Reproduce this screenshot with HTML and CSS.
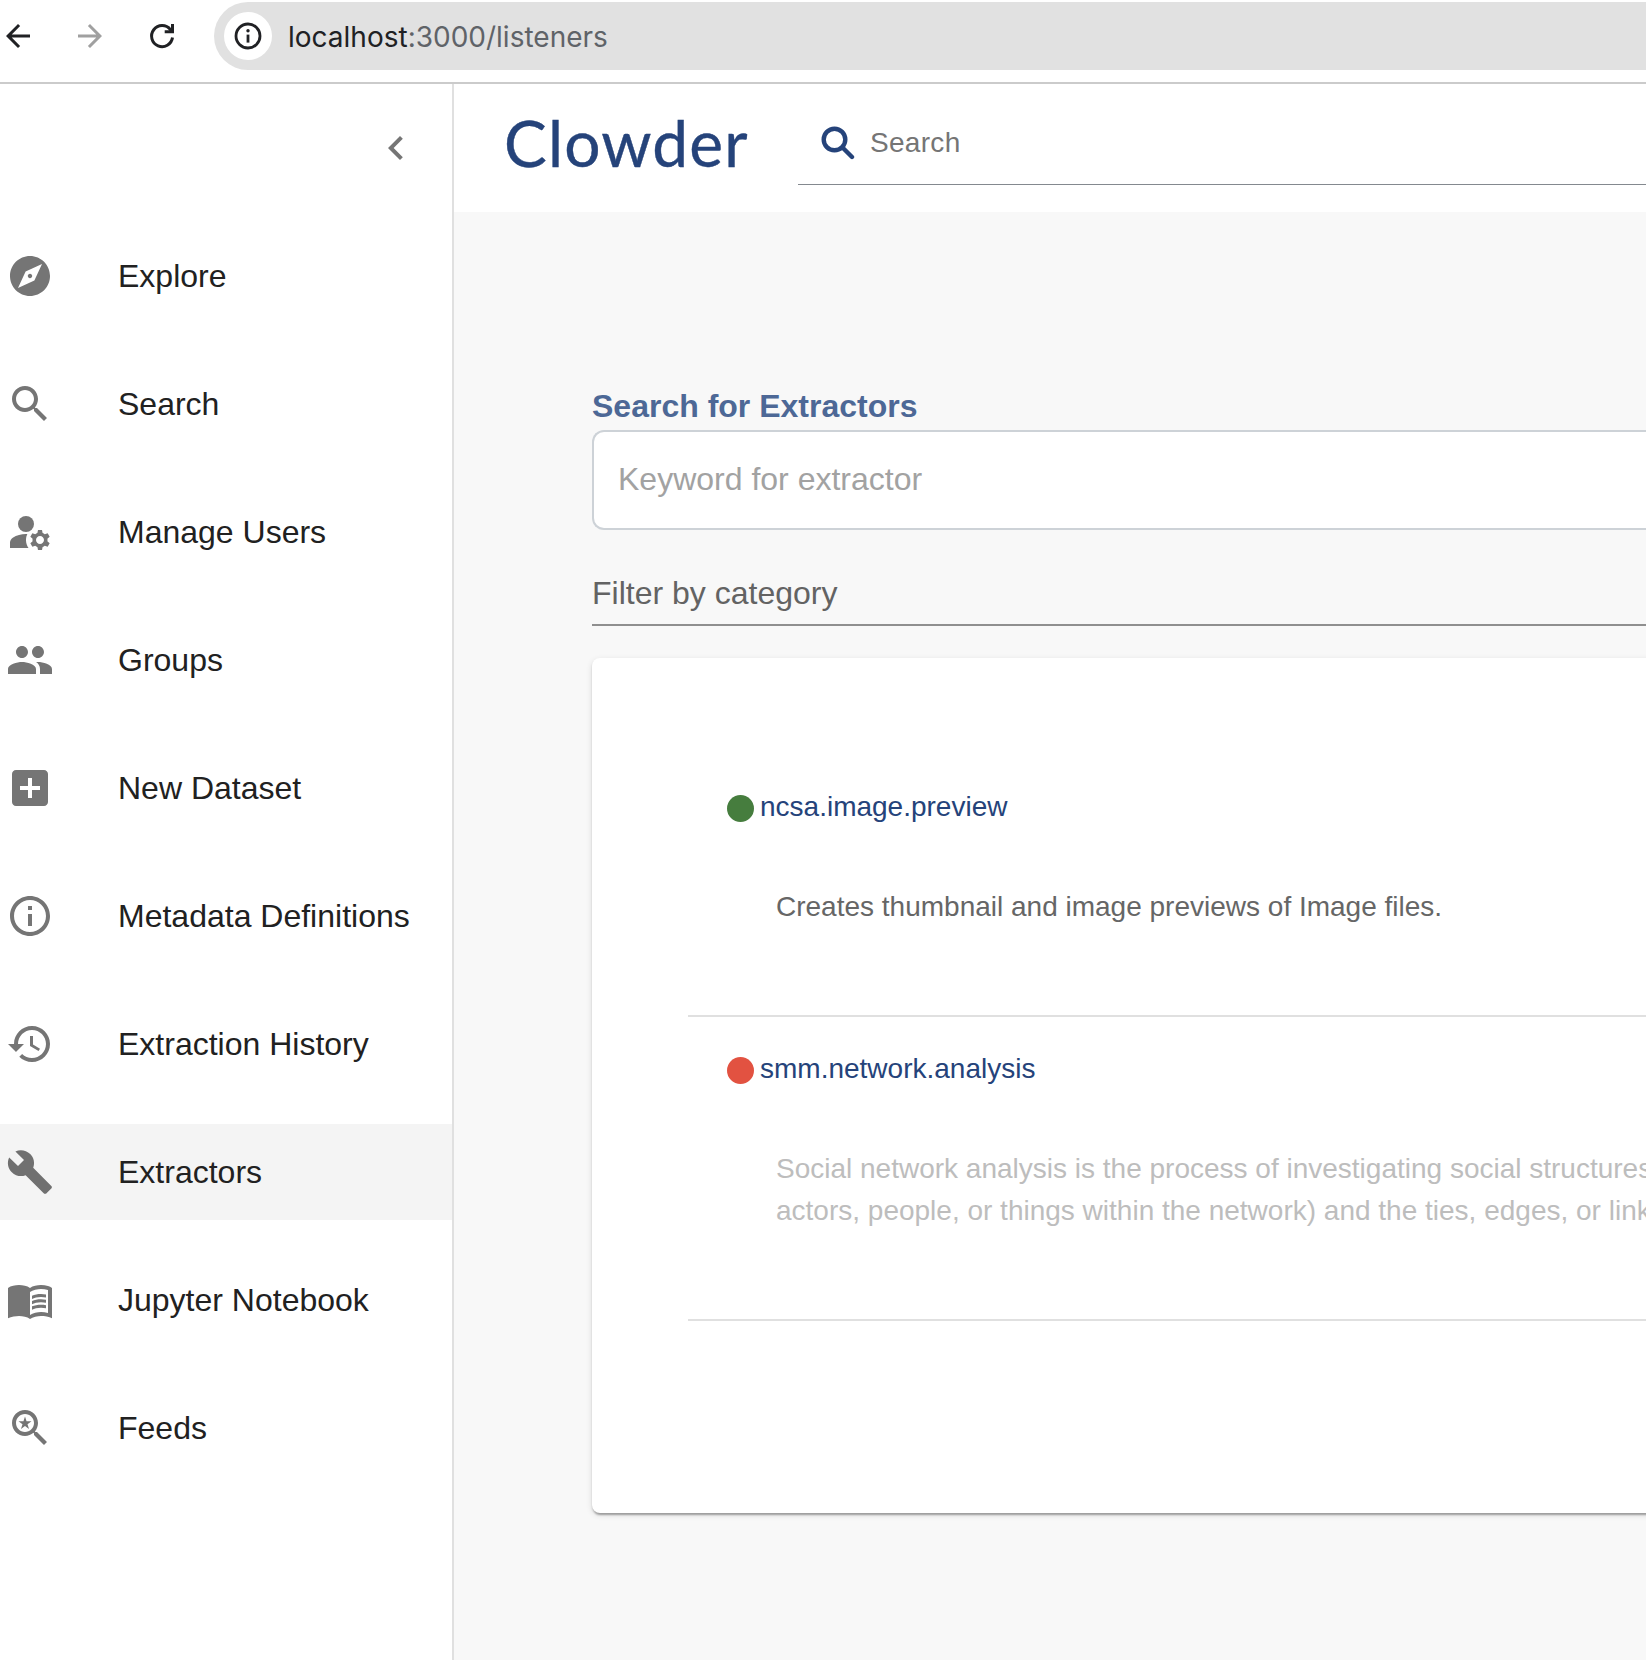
FILE: index.html
```html
<!DOCTYPE html>
<html lang="en">
<head>
<meta charset="utf-8">
<title>Clowder</title>
<link rel="stylesheet" href="styles.css">
</head>
<body>
<div class="browser-bar">
  <svg class="nav-icon" viewBox="0 0 24 24"><path d="M20 11H7.83l5.59-5.59L12 4l-8 8 8 8 1.41-1.41L7.83 13H20v-2z"/></svg>
  <svg class="nav-icon nav-icon-disabled" viewBox="0 0 24 24"><path d="M12 4l-1.41 1.41L16.17 11H4v2h12.17l-5.58 5.59L12 20l8-8z"/></svg>
  <svg class="nav-icon" viewBox="0 0 24 24"><path d="M19 13A7 7 0 1 1 17.6 7.8L18.4 9" fill="none" stroke="currentColor" stroke-width="2"/><path d="M18 4h2v6.2h-6.2v-2H18z"/></svg>
  <div class="address">
    <span class="site-info"><svg viewBox="0 0 28 28"><circle cx="14" cy="14" r="12" fill="none" stroke="currentColor" stroke-width="2.8"/><path d="M12.6 12.6h2.8v8h-2.8z"/><circle cx="14" cy="8.8" r="1.7"/></svg></span>
    <span class="url"><span class="host">localhost</span>:3000/listeners</span>
  </div>
</div>
<div class="app">
  <nav class="sidebar">
    <div class="sidebar-head"><svg class="icon" viewBox="0 0 24 24"><path d="M15.41 7.41 14 6l-6 6 6 6 1.41-1.41L10.83 12z"/></svg></div>
    <ul class="menu">
      <li class="menu-item"><svg class="icon" viewBox="0 0 24 24"><path d="M12 10.9c-.61 0-1.1.49-1.1 1.1s.49 1.1 1.1 1.1c.61 0 1.1-.49 1.1-1.1s-.49-1.1-1.1-1.1zM12 2C6.48 2 2 6.48 2 12s4.48 10 10 10 10-4.48 10-10S17.52 2 12 2zm2.19 12.19L6 18l3.81-8.19L18 6l-3.81 8.19z"/></svg><span>Explore</span></li>
      <li class="menu-item"><svg class="icon" viewBox="0 0 24 24"><path d="M15.5 14h-.79l-.28-.27C15.41 12.59 16 11.11 16 9.5 16 5.91 13.09 3 9.5 3S3 5.91 3 9.5 5.91 16 9.5 16c1.61 0 3.09-.59 4.23-1.57l.27.28v.79l5 4.99L20.49 19l-4.99-5zm-6 0C7.01 14 5 11.99 5 9.5S7.01 5 9.5 5 14 7.01 14 9.5 11.99 14 9.5 14z"/></svg><span>Search</span></li>
      <li class="menu-item"><svg class="icon" viewBox="0 0 24 24"><circle cx="10" cy="8" r="4"/><path d="M10.67 13.02c-.22-.01-.44-.02-.67-.02-2.42 0-4.68.67-6.61 1.82-.88.52-1.39 1.5-1.39 2.53V20h9.26c-.79-1.13-1.26-2.51-1.26-4 0-1.07.25-2.07.67-2.98zM20.75 16c0-.22-.03-.42-.06-.63l1.14-1.01-1-1.73-1.45.49c-.32-.27-.68-.48-1.08-.63L18 11h-2l-.3 1.49c-.4.15-.76.36-1.08.63l-1.45-.49-1 1.73 1.14 1.01c-.03.21-.06.41-.06.63s.03.42.06.63l-1.14 1.01 1 1.73 1.45-.49c.32.27.68.48 1.08.63L16 21h2l.3-1.49c.4-.15.76-.36 1.08-.63l1.45.49 1-1.73-1.14-1.01c.03-.21.06-.41.06-.63zM17 18c-1.1 0-2-.9-2-2s.9-2 2-2 2 .9 2 2-.9 2-2 2z"/></svg><span>Manage Users</span></li>
      <li class="menu-item"><svg class="icon" viewBox="0 0 24 24"><path d="M16 11c1.66 0 2.99-1.34 2.99-3S17.66 5 16 5c-1.66 0-3 1.34-3 3s1.34 3 3 3zm-8 0c1.66 0 2.99-1.34 2.99-3S9.66 5 8 5C6.34 5 5 6.34 5 8s1.34 3 3 3zm0 2c-2.33 0-7 1.17-7 3.5V19h14v-2.5c0-2.33-4.67-3.5-7-3.5zm8 0c-.29 0-.62.02-.97.05 1.16.84 1.97 1.97 1.97 3.45V19h6v-2.5c0-2.33-4.67-3.5-7-3.5z"/></svg><span>Groups</span></li>
      <li class="menu-item"><svg class="icon" viewBox="0 0 24 24"><path d="M19 3H5c-1.11 0-2 .9-2 2v14c0 1.1.89 2 2 2h14c1.1 0 2-.9 2-2V5c0-1.1-.9-2-2-2zm-2 10h-4v4h-2v-4H7v-2h4V7h2v4h4v2z"/></svg><span>New Dataset</span></li>
      <li class="menu-item"><svg class="icon" viewBox="0 0 24 24"><path d="M11 7h2v2h-2zm0 4h2v6h-2zm1-9C6.48 2 2 6.48 2 12s4.48 10 10 10 10-4.48 10-10S17.52 2 12 2zm0 18c-4.41 0-8-3.59-8-8s3.59-8 8-8 8 3.59 8 8-3.59 8-8 8z"/></svg><span>Metadata Definitions</span></li>
      <li class="menu-item"><svg class="icon" viewBox="0 0 24 24"><path d="M13 3c-4.97 0-9 4.03-9 9H1l3.89 3.89.07.14L9 12H6c0-3.87 3.13-7 7-7s7 3.13 7 7-3.13 7-7 7c-1.93 0-3.68-.79-4.94-2.06l-1.42 1.42C8.27 19.99 10.51 21 13 21c4.97 0 9-4.03 9-9s-4.03-9-9-9zm-1 5v5l4.28 2.54.72-1.21-3.5-2.08V8H12z"/></svg><span>Extraction History</span></li>
      <li class="menu-item menu-item-selected"><svg class="icon" viewBox="0 0 24 24"><path d="M22.9 19.2l-9.3-9.3c.9-2.3.4-5-1.5-6.9-2-2-5-2.4-7.4-1.3L9 6 6 9 1.6 4.7C.4 7.1.9 10.1 2.9 12.1c1.9 1.9 4.6 2.4 6.9 1.5l9.3 9.3h.9l2.9-2.9z"/></svg><span>Extractors</span></li>
      <li class="menu-item"><svg class="icon" viewBox="0 0 24 24"><path d="M21 5c-1.11-.35-2.33-.5-3.5-.5-1.95 0-4.05.4-5.5 1.5-1.45-1.1-3.55-1.5-5.5-1.5S2.45 4.9 1 6v15.15C2.6 20.4 5.05 20 6.5 20c1.95 0 4.05.4 5.5 1.5 1.35-.85 3.8-1.5 5.5-1.5 1.65 0 4.1.3 5.5 1.15V6c-.6-.45-1.25-.75-2-1zm0 13.5c-1.1-.35-2.3-.5-3.5-.5-1.7 0-4.15.65-5.5 1.5V8c1.35-.85 3.8-1.5 5.5-1.5 1.2 0 2.4.15 3.5.5v11.5z"/><path d="M17.5 10.5c.88 0 1.73.09 2.5.26V9.24c-.79-.15-1.64-.24-2.5-.24-1.7 0-3.24.29-4.5.83v1.66c1.13-.64 2.7-.99 4.5-.99zM13 12.49v1.66c1.13-.64 2.7-.99 4.5-.99.88 0 1.73.09 2.5.26V11.9c-.79-.15-1.64-.24-2.5-.24-1.7 0-3.24.3-4.5.83zm4.5 1.84c-1.7 0-3.24.29-4.5.83v1.66c1.13-.64 2.7-.99 4.5-.99.88 0 1.73.09 2.5.26v-1.52c-.79-.16-1.64-.24-2.5-.24z"/></svg><span>Jupyter Notebook</span></li>
      <li class="menu-item"><svg class="icon" viewBox="0 0 24 24"><path d="M15.5 14h-.79l-.28-.27C15.41 12.59 16 11.11 16 9.5 16 5.91 13.09 3 9.5 3S3 5.91 3 9.5 5.91 16 9.5 16c1.61 0 3.09-.59 4.23-1.57l.27.28v.79l5 4.99L20.49 19l-4.99-5zm-6 0C7.01 14 5 11.99 5 9.5S7.01 5 9.5 5 14 7.01 14 9.5 11.99 14 9.5 14z"/><path d="M9.5 6.3l.77 2.37h2.49l-2.01 1.46.77 2.37-2.02-1.46-2.02 1.46.77-2.37-2.01-1.46h2.49z"/></svg><span>Feeds</span></li>
    </ul>
  </nav>
  <main class="main">
    <header class="topbar">
      <span class="logo">Clowder</span>
      <div class="top-search">
        <svg class="top-search-icon" viewBox="0 0 34 34"><circle cx="13.5" cy="13.5" r="10.8"/><path d="M21.5 21.5 31 31"/></svg>
        <span>Search</span>
      </div>
    </header>
    <section class="content">
      <label class="field-label">Search for Extractors</label>
      <div class="keyword-field">Keyword for extractor</div>
      <div class="category-field">Filter by category</div>
      <div class="card">
        <article class="extractor">
          <h2 class="extractor-name"><span class="status status-alive"></span>ncsa.image.preview</h2>
          <p class="extractor-desc">Creates thumbnail and image previews of Image files.</p>
        </article>
        <article class="extractor">
          <h2 class="extractor-name"><span class="status status-offline"></span>smm.network.analysis</h2>
          <p class="extractor-desc extractor-desc-muted">Social network analysis is the process of investigating social structures<br>actors, people, or things within the network) and the ties, edges, or link</p>
        </article>
      </div>
    </section>
  </main>
</div>
</body>
</html>
```
FILE: styles.css
```css
* { box-sizing: border-box; }
body {
  margin: 0;
  width: 1646px;
  height: 1660px;
  overflow: hidden;
  display: flex;
  flex-direction: column;
  background: #fff;
  font-family: "Liberation Sans", Arial, sans-serif;
}
svg { display: block; fill: currentColor; flex: none; }

.browser-bar {
  height: 84px;
  flex: none;
  display: flex;
  align-items: flex-start;
  gap: 36px;
  padding-top: 2px;
  border-bottom: 2px solid #cbcbcb;
  color: #202124;
}
.nav-icon { width: 36px; height: 36px; margin-top: 16px; }
.nav-icon-disabled { color: #a0a0a0; }
.address {
  flex: 1;
  height: 68px;
  margin-left: -2px;
  padding-left: 10px;
  display: flex;
  align-items: center;
  gap: 16px;
  background: #e1e1e1;
  border-radius: 34px 0 0 34px;
}
.site-info {
  width: 48px;
  height: 48px;
  border-radius: 50%;
  background: #fff;
  display: flex;
  align-items: center;
  justify-content: center;
}
.site-info svg { width: 28px; height: 28px; }
.url {
  padding-top: 1px;
  font: 28px Inter, sans-serif;
  color: #5f6368;
}
.host { color: #202124; }

.app { flex: 1; min-height: 0; display: flex; }
.sidebar {
  width: 454px;
  flex: none;
  border-right: 2px solid #e0e0e0;
}
.sidebar-head {
  height: 128px;
  padding-right: 32px;
  display: flex;
  align-items: center;
  justify-content: flex-end;
}
.icon { width: 48px; height: 48px; color: #757575; }
.menu {
  list-style: none;
  margin: 0;
  padding: 16px 0;
  display: flex;
  flex-direction: column;
  gap: 32px;
}
.menu-item {
  height: 96px;
  padding-left: 6px;
  display: flex;
  align-items: center;
  gap: 64px;
  font-size: 32px;
  color: #212121;
}
.menu-item-selected { background: #f4f4f4; }
.menu-item-selected .icon { color: #707070; }

.main { flex: 1; min-width: 0; background: #f8f8f8; overflow: hidden; }
.topbar {
  height: 128px;
  padding-left: 50px;
  display: flex;
  background: #fff;
}
.logo {
  width: 294px;
  font: 64px/80px Lato, sans-serif;
  padding-top: 19px;
  letter-spacing: 1.2px;
  color: #25437a;
  -webkit-text-stroke: .4px #25437a;
}
.top-search {
  flex: 1;
  height: 101px;
  padding: 42px 0 0 23px;
  display: flex;
  gap: 15px;
  border-bottom: 1px solid #84898f;
  font-size: 28px;
  line-height: 34px;
  letter-spacing: .3px;
  color: #757575;
}
.top-search-icon {
  width: 34px;
  height: 34px;
  fill: none;
  stroke: #25437a;
  stroke-width: 4.4;
  stroke-linecap: round;
}

.content { padding: 176px 0 0 138px; font-size: 32px; }
.field-label {
  display: block;
  height: 42px;
  line-height: 36px;
  font-weight: 700;
  color: #4d6896;
}
.keyword-field {
  height: 100px;
  padding-left: 24px;
  line-height: 94px;
  background: #fff;
  border: 2px solid #cdd2d7;
  border-right: 0;
  border-radius: 12px 0 0 12px;
  color: #a2a2a2;
}
.category-field {
  height: 66px;
  margin: 30px 0 32px;
  line-height: 66px;
  border-bottom: 2px solid #8f8f8f;
  color: #636363;
}
.card {
  height: 855px;
  margin-right: -16px;
  padding: 97px 0 0 96px;
  background: #fff;
  border-radius: 8px;
  box-shadow: 0 4px 2px -2px rgba(0,0,0,.2), 0 2px 2px rgba(0,0,0,.14), 0 2px 6px rgba(0,0,0,.12);
}
.extractor {
  padding: 36px 0 87px 38.5px;
  border-bottom: 2px solid #e0e0e0;
  font-size: 28px;
}
.extractor-name {
  height: 32px;
  margin: 0 0 63px;
  display: flex;
  align-items: center;
  gap: 6.5px;
  font-size: 28px;
  font-weight: 400;
  line-height: 32px;
  color: #25437a;
}
.status { width: 27px; height: 27px; margin-top: 3px; border-radius: 50%; }
.status-alive { background: #467d3e; }
.status-offline { background: #e25241; }
.extractor-desc {
  margin: 0 0 0 49.5px;
  line-height: 42px;
  white-space: nowrap;
  color: #666;
}
.extractor-desc-muted { color: #bdbdbd; }
```
